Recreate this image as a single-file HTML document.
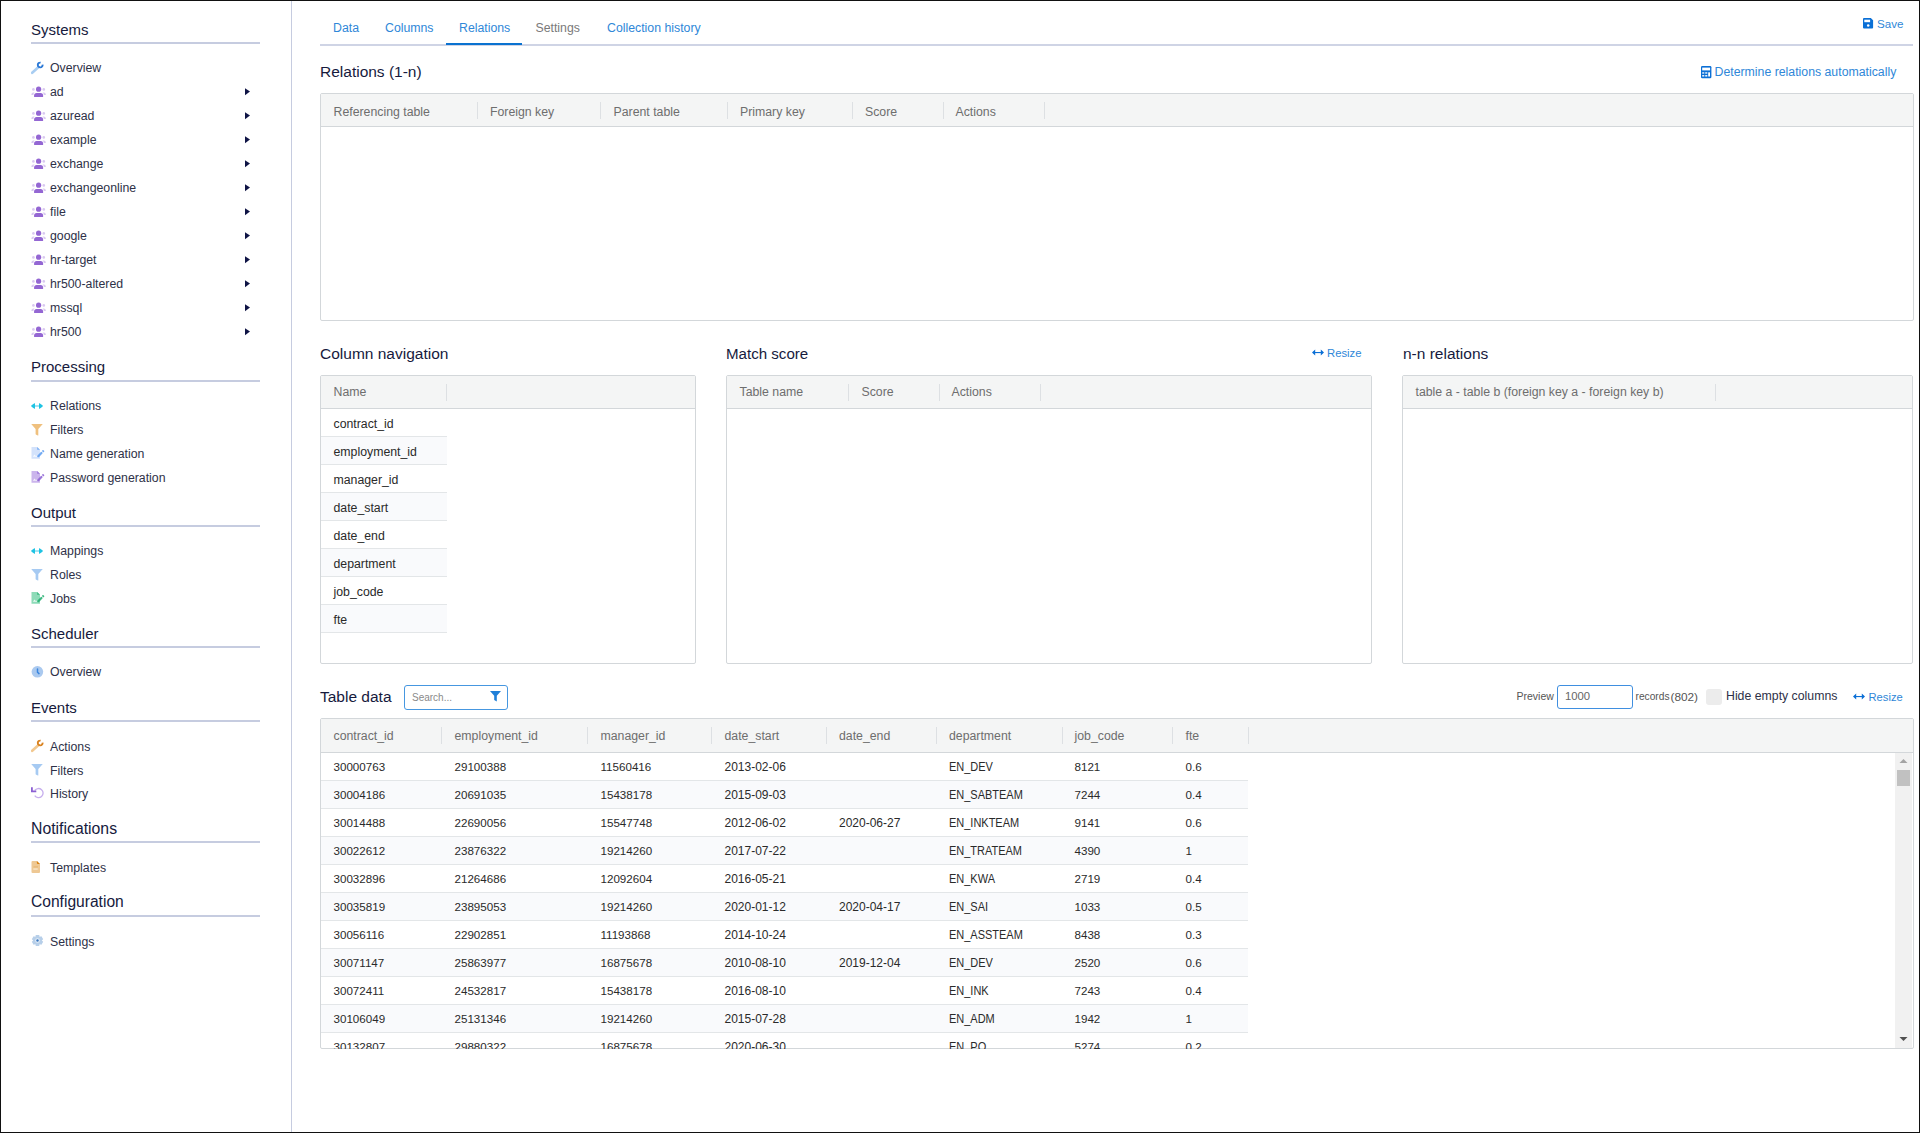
<!DOCTYPE html>
<html><head><meta charset="utf-8"><style>
html,body{margin:0;padding:0;background:#fff;width:1920px;height:1133px;overflow:hidden;font-family:"Liberation Sans", sans-serif;}
.t{position:absolute;white-space:nowrap;font-family:"Liberation Sans", sans-serif;}
.r{position:absolute;}
</style></head><body>
<div class="r" style="left:291px;top:0px;width:1px;height:1133px;background:#c6cce0"></div><div class="t" style="left:31px;top:22.30px;font-size:15px;line-height:15px;color:#161a3d;">Systems</div><div class="r" style="left:31px;top:42px;width:229px;height:2px;background:#c6cce0"></div><div class="t" style="left:50px;top:61.59px;font-size:12.3px;line-height:12.3px;color:#2e3148;">Overview</div><svg class="r" style="left:31px;top:61px" width="14" height="14" viewBox="0 0 14 14"><path d="M1.2 11.8 L7.3 6.2" stroke="#a8cdf2" stroke-width="2.6" stroke-linecap="round"/><path d="M11.56 3.58 A2.4 2.4 0 1 1 9.62 1.64" stroke="#2a78d6" stroke-width="1.9" fill="none"/></svg><div class="t" style="left:50px;top:85.59px;font-size:12.3px;line-height:12.3px;color:#2e3148;">ad</div><svg class="r" style="left:31px;top:86px" width="16" height="12" viewBox="0 0 16 12"><circle cx="7.6" cy="3.2" r="2.6" fill="#9467d3"/><path d="M3.1 11 V9.6 Q3.1 7.1 5.6 7.1 H9.6 Q12.1 7.1 12.1 9.6 V11Z" fill="#9467d3"/><circle cx="2.4" cy="3.4" r="1.3" fill="#d9c8f0"/><circle cx="12.8" cy="3.4" r="1.3" fill="#d9c8f0"/><path d="M0.3 9 Q0.3 6.6 2.6 6.6 H3.6 Q2.4 7.6 2.4 9Z" fill="#d9c8f0"/><path d="M14.9 9 Q14.9 6.6 12.6 6.6 H11.6 Q12.8 7.6 12.8 9Z" fill="#d9c8f0"/></svg><svg class="r" style="left:245px;top:88px" width="6" height="8" viewBox="0 0 6 8"><path d="M0 0.2 L5 3.6 L0 7.2Z" fill="#0f1445"/></svg><div class="t" style="left:50px;top:109.59px;font-size:12.3px;line-height:12.3px;color:#2e3148;">azuread</div><svg class="r" style="left:31px;top:110px" width="16" height="12" viewBox="0 0 16 12"><circle cx="7.6" cy="3.2" r="2.6" fill="#9467d3"/><path d="M3.1 11 V9.6 Q3.1 7.1 5.6 7.1 H9.6 Q12.1 7.1 12.1 9.6 V11Z" fill="#9467d3"/><circle cx="2.4" cy="3.4" r="1.3" fill="#d9c8f0"/><circle cx="12.8" cy="3.4" r="1.3" fill="#d9c8f0"/><path d="M0.3 9 Q0.3 6.6 2.6 6.6 H3.6 Q2.4 7.6 2.4 9Z" fill="#d9c8f0"/><path d="M14.9 9 Q14.9 6.6 12.6 6.6 H11.6 Q12.8 7.6 12.8 9Z" fill="#d9c8f0"/></svg><svg class="r" style="left:245px;top:112px" width="6" height="8" viewBox="0 0 6 8"><path d="M0 0.2 L5 3.6 L0 7.2Z" fill="#0f1445"/></svg><div class="t" style="left:50px;top:133.59px;font-size:12.3px;line-height:12.3px;color:#2e3148;">example</div><svg class="r" style="left:31px;top:134px" width="16" height="12" viewBox="0 0 16 12"><circle cx="7.6" cy="3.2" r="2.6" fill="#9467d3"/><path d="M3.1 11 V9.6 Q3.1 7.1 5.6 7.1 H9.6 Q12.1 7.1 12.1 9.6 V11Z" fill="#9467d3"/><circle cx="2.4" cy="3.4" r="1.3" fill="#d9c8f0"/><circle cx="12.8" cy="3.4" r="1.3" fill="#d9c8f0"/><path d="M0.3 9 Q0.3 6.6 2.6 6.6 H3.6 Q2.4 7.6 2.4 9Z" fill="#d9c8f0"/><path d="M14.9 9 Q14.9 6.6 12.6 6.6 H11.6 Q12.8 7.6 12.8 9Z" fill="#d9c8f0"/></svg><svg class="r" style="left:245px;top:136px" width="6" height="8" viewBox="0 0 6 8"><path d="M0 0.2 L5 3.6 L0 7.2Z" fill="#0f1445"/></svg><div class="t" style="left:50px;top:157.59px;font-size:12.3px;line-height:12.3px;color:#2e3148;">exchange</div><svg class="r" style="left:31px;top:158px" width="16" height="12" viewBox="0 0 16 12"><circle cx="7.6" cy="3.2" r="2.6" fill="#9467d3"/><path d="M3.1 11 V9.6 Q3.1 7.1 5.6 7.1 H9.6 Q12.1 7.1 12.1 9.6 V11Z" fill="#9467d3"/><circle cx="2.4" cy="3.4" r="1.3" fill="#d9c8f0"/><circle cx="12.8" cy="3.4" r="1.3" fill="#d9c8f0"/><path d="M0.3 9 Q0.3 6.6 2.6 6.6 H3.6 Q2.4 7.6 2.4 9Z" fill="#d9c8f0"/><path d="M14.9 9 Q14.9 6.6 12.6 6.6 H11.6 Q12.8 7.6 12.8 9Z" fill="#d9c8f0"/></svg><svg class="r" style="left:245px;top:160px" width="6" height="8" viewBox="0 0 6 8"><path d="M0 0.2 L5 3.6 L0 7.2Z" fill="#0f1445"/></svg><div class="t" style="left:50px;top:181.59px;font-size:12.3px;line-height:12.3px;color:#2e3148;">exchangeonline</div><svg class="r" style="left:31px;top:182px" width="16" height="12" viewBox="0 0 16 12"><circle cx="7.6" cy="3.2" r="2.6" fill="#9467d3"/><path d="M3.1 11 V9.6 Q3.1 7.1 5.6 7.1 H9.6 Q12.1 7.1 12.1 9.6 V11Z" fill="#9467d3"/><circle cx="2.4" cy="3.4" r="1.3" fill="#d9c8f0"/><circle cx="12.8" cy="3.4" r="1.3" fill="#d9c8f0"/><path d="M0.3 9 Q0.3 6.6 2.6 6.6 H3.6 Q2.4 7.6 2.4 9Z" fill="#d9c8f0"/><path d="M14.9 9 Q14.9 6.6 12.6 6.6 H11.6 Q12.8 7.6 12.8 9Z" fill="#d9c8f0"/></svg><svg class="r" style="left:245px;top:184px" width="6" height="8" viewBox="0 0 6 8"><path d="M0 0.2 L5 3.6 L0 7.2Z" fill="#0f1445"/></svg><div class="t" style="left:50px;top:205.59px;font-size:12.3px;line-height:12.3px;color:#2e3148;">file</div><svg class="r" style="left:31px;top:206px" width="16" height="12" viewBox="0 0 16 12"><circle cx="7.6" cy="3.2" r="2.6" fill="#9467d3"/><path d="M3.1 11 V9.6 Q3.1 7.1 5.6 7.1 H9.6 Q12.1 7.1 12.1 9.6 V11Z" fill="#9467d3"/><circle cx="2.4" cy="3.4" r="1.3" fill="#d9c8f0"/><circle cx="12.8" cy="3.4" r="1.3" fill="#d9c8f0"/><path d="M0.3 9 Q0.3 6.6 2.6 6.6 H3.6 Q2.4 7.6 2.4 9Z" fill="#d9c8f0"/><path d="M14.9 9 Q14.9 6.6 12.6 6.6 H11.6 Q12.8 7.6 12.8 9Z" fill="#d9c8f0"/></svg><svg class="r" style="left:245px;top:208px" width="6" height="8" viewBox="0 0 6 8"><path d="M0 0.2 L5 3.6 L0 7.2Z" fill="#0f1445"/></svg><div class="t" style="left:50px;top:229.59px;font-size:12.3px;line-height:12.3px;color:#2e3148;">google</div><svg class="r" style="left:31px;top:230px" width="16" height="12" viewBox="0 0 16 12"><circle cx="7.6" cy="3.2" r="2.6" fill="#9467d3"/><path d="M3.1 11 V9.6 Q3.1 7.1 5.6 7.1 H9.6 Q12.1 7.1 12.1 9.6 V11Z" fill="#9467d3"/><circle cx="2.4" cy="3.4" r="1.3" fill="#d9c8f0"/><circle cx="12.8" cy="3.4" r="1.3" fill="#d9c8f0"/><path d="M0.3 9 Q0.3 6.6 2.6 6.6 H3.6 Q2.4 7.6 2.4 9Z" fill="#d9c8f0"/><path d="M14.9 9 Q14.9 6.6 12.6 6.6 H11.6 Q12.8 7.6 12.8 9Z" fill="#d9c8f0"/></svg><svg class="r" style="left:245px;top:232px" width="6" height="8" viewBox="0 0 6 8"><path d="M0 0.2 L5 3.6 L0 7.2Z" fill="#0f1445"/></svg><div class="t" style="left:50px;top:253.59px;font-size:12.3px;line-height:12.3px;color:#2e3148;">hr-target</div><svg class="r" style="left:31px;top:254px" width="16" height="12" viewBox="0 0 16 12"><circle cx="7.6" cy="3.2" r="2.6" fill="#9467d3"/><path d="M3.1 11 V9.6 Q3.1 7.1 5.6 7.1 H9.6 Q12.1 7.1 12.1 9.6 V11Z" fill="#9467d3"/><circle cx="2.4" cy="3.4" r="1.3" fill="#d9c8f0"/><circle cx="12.8" cy="3.4" r="1.3" fill="#d9c8f0"/><path d="M0.3 9 Q0.3 6.6 2.6 6.6 H3.6 Q2.4 7.6 2.4 9Z" fill="#d9c8f0"/><path d="M14.9 9 Q14.9 6.6 12.6 6.6 H11.6 Q12.8 7.6 12.8 9Z" fill="#d9c8f0"/></svg><svg class="r" style="left:245px;top:256px" width="6" height="8" viewBox="0 0 6 8"><path d="M0 0.2 L5 3.6 L0 7.2Z" fill="#0f1445"/></svg><div class="t" style="left:50px;top:277.59px;font-size:12.3px;line-height:12.3px;color:#2e3148;">hr500-altered</div><svg class="r" style="left:31px;top:278px" width="16" height="12" viewBox="0 0 16 12"><circle cx="7.6" cy="3.2" r="2.6" fill="#9467d3"/><path d="M3.1 11 V9.6 Q3.1 7.1 5.6 7.1 H9.6 Q12.1 7.1 12.1 9.6 V11Z" fill="#9467d3"/><circle cx="2.4" cy="3.4" r="1.3" fill="#d9c8f0"/><circle cx="12.8" cy="3.4" r="1.3" fill="#d9c8f0"/><path d="M0.3 9 Q0.3 6.6 2.6 6.6 H3.6 Q2.4 7.6 2.4 9Z" fill="#d9c8f0"/><path d="M14.9 9 Q14.9 6.6 12.6 6.6 H11.6 Q12.8 7.6 12.8 9Z" fill="#d9c8f0"/></svg><svg class="r" style="left:245px;top:280px" width="6" height="8" viewBox="0 0 6 8"><path d="M0 0.2 L5 3.6 L0 7.2Z" fill="#0f1445"/></svg><div class="t" style="left:50px;top:301.59px;font-size:12.3px;line-height:12.3px;color:#2e3148;">mssql</div><svg class="r" style="left:31px;top:302px" width="16" height="12" viewBox="0 0 16 12"><circle cx="7.6" cy="3.2" r="2.6" fill="#9467d3"/><path d="M3.1 11 V9.6 Q3.1 7.1 5.6 7.1 H9.6 Q12.1 7.1 12.1 9.6 V11Z" fill="#9467d3"/><circle cx="2.4" cy="3.4" r="1.3" fill="#d9c8f0"/><circle cx="12.8" cy="3.4" r="1.3" fill="#d9c8f0"/><path d="M0.3 9 Q0.3 6.6 2.6 6.6 H3.6 Q2.4 7.6 2.4 9Z" fill="#d9c8f0"/><path d="M14.9 9 Q14.9 6.6 12.6 6.6 H11.6 Q12.8 7.6 12.8 9Z" fill="#d9c8f0"/></svg><svg class="r" style="left:245px;top:304px" width="6" height="8" viewBox="0 0 6 8"><path d="M0 0.2 L5 3.6 L0 7.2Z" fill="#0f1445"/></svg><div class="t" style="left:50px;top:325.59px;font-size:12.3px;line-height:12.3px;color:#2e3148;">hr500</div><svg class="r" style="left:31px;top:326px" width="16" height="12" viewBox="0 0 16 12"><circle cx="7.6" cy="3.2" r="2.6" fill="#9467d3"/><path d="M3.1 11 V9.6 Q3.1 7.1 5.6 7.1 H9.6 Q12.1 7.1 12.1 9.6 V11Z" fill="#9467d3"/><circle cx="2.4" cy="3.4" r="1.3" fill="#d9c8f0"/><circle cx="12.8" cy="3.4" r="1.3" fill="#d9c8f0"/><path d="M0.3 9 Q0.3 6.6 2.6 6.6 H3.6 Q2.4 7.6 2.4 9Z" fill="#d9c8f0"/><path d="M14.9 9 Q14.9 6.6 12.6 6.6 H11.6 Q12.8 7.6 12.8 9Z" fill="#d9c8f0"/></svg><svg class="r" style="left:245px;top:328px" width="6" height="8" viewBox="0 0 6 8"><path d="M0 0.2 L5 3.6 L0 7.2Z" fill="#0f1445"/></svg><div class="t" style="left:31px;top:359.30px;font-size:15px;line-height:15px;color:#161a3d;">Processing</div><div class="r" style="left:31px;top:380px;width:229px;height:2px;background:#c6cce0"></div><div class="t" style="left:50px;top:399.59px;font-size:12.3px;line-height:12.3px;color:#2e3148;">Relations</div><div class="t" style="left:50px;top:423.59px;font-size:12.3px;line-height:12.3px;color:#2e3148;">Filters</div><div class="t" style="left:50px;top:447.59px;font-size:12.3px;line-height:12.3px;color:#2e3148;">Name generation</div><div class="t" style="left:50px;top:471.59px;font-size:12.3px;line-height:12.3px;color:#2e3148;">Password generation</div><svg class="r" style="left:31px;top:403px" width="12" height="6" viewBox="0 0 12 6"><rect x="3" y="2.1" width="6" height="1.8" fill="#9be3f2"/><path d="M0.2 3 Q0.2 2.6 0.6 2.3 L3.4 0.2 Q4 0 4 0.6 V5.4 Q4 6 3.4 5.8 L0.6 3.7 Q0.2 3.4 0.2 3Z" fill="#1fc3e3"/><path d="M11.8 3 Q11.8 2.6 11.4 2.3 L8.6 0.2 Q8 0 8 0.6 V5.4 Q8 6 8.6 5.8 L11.4 3.7 Q11.8 3.4 11.8 3Z" fill="#1fc3e3"/></svg><svg class="r" style="left:31px;top:424px" width="12" height="12" viewBox="0 0 12 12"><path d="M0.2 0 H11.8 L7.3 5 V11.4 Q6.6 11.6 4.6 10.2 V5Z" fill="#efc07e"/></svg><svg class="r" style="left:31px;top:447px" width="14" height="12" viewBox="0 0 14 12"><path d="M0.5 0 H6.2 L9 2.7 V11.7 H0.5Z" fill="#d3e2fb"/><path d="M6.2 0 L9 2.7 H6.2Z" fill="#5c9df1" opacity="0.75"/><path d="M7.3 9.2 L10.4 6" stroke="#5c9df1" stroke-width="2.2" stroke-linecap="round" opacity="0.85"/><path d="M12 3.9 L12.4 4.3" stroke="#5c9df1" stroke-width="1.7" stroke-linecap="round" opacity="0.85"/><path d="M1.8 9.8 L3.5 7.4 L4.8 8.9 L5.4 8.4 L6.4 9.8Z" fill="#fff" opacity="0.8"/></svg><svg class="r" style="left:31px;top:471px" width="14" height="12" viewBox="0 0 14 12"><path d="M0.5 0 H6.2 L9 2.7 V11.7 H0.5Z" fill="#cbb5ec"/><path d="M6.2 0 L9 2.7 H6.2Z" fill="#8b60d4" opacity="0.75"/><path d="M7.3 9.2 L10.4 6" stroke="#8b60d4" stroke-width="2.2" stroke-linecap="round" opacity="0.85"/><path d="M12 3.9 L12.4 4.3" stroke="#8b60d4" stroke-width="1.7" stroke-linecap="round" opacity="0.85"/><path d="M1.8 9.8 L3.5 7.4 L4.8 8.9 L5.4 8.4 L6.4 9.8Z" fill="#fff" opacity="0.8"/></svg><div class="t" style="left:31px;top:505.30px;font-size:15px;line-height:15px;color:#161a3d;">Output</div><div class="r" style="left:31px;top:525px;width:229px;height:2px;background:#c6cce0"></div><div class="t" style="left:50px;top:544.59px;font-size:12.3px;line-height:12.3px;color:#2e3148;">Mappings</div><div class="t" style="left:50px;top:568.59px;font-size:12.3px;line-height:12.3px;color:#2e3148;">Roles</div><div class="t" style="left:50px;top:592.59px;font-size:12.3px;line-height:12.3px;color:#2e3148;">Jobs</div><svg class="r" style="left:31px;top:548px" width="12" height="6" viewBox="0 0 12 6"><rect x="3" y="2.1" width="6" height="1.8" fill="#9be3f2"/><path d="M0.2 3 Q0.2 2.6 0.6 2.3 L3.4 0.2 Q4 0 4 0.6 V5.4 Q4 6 3.4 5.8 L0.6 3.7 Q0.2 3.4 0.2 3Z" fill="#1fc3e3"/><path d="M11.8 3 Q11.8 2.6 11.4 2.3 L8.6 0.2 Q8 0 8 0.6 V5.4 Q8 6 8.6 5.8 L11.4 3.7 Q11.8 3.4 11.8 3Z" fill="#1fc3e3"/></svg><svg class="r" style="left:31px;top:569px" width="12" height="12" viewBox="0 0 12 12"><path d="M0.2 0 H11.8 L7.3 5 V11.4 Q6.6 11.6 4.6 10.2 V5Z" fill="#a6caf2"/></svg><svg class="r" style="left:31px;top:592px" width="14" height="12" viewBox="0 0 14 12"><path d="M0.5 0 H6.2 L9 2.7 V11.7 H0.5Z" fill="#8edbb8"/><path d="M6.2 0 L9 2.7 H6.2Z" fill="#1fae6e" opacity="0.75"/><path d="M7.3 9.2 L10.4 6" stroke="#1fae6e" stroke-width="2.2" stroke-linecap="round" opacity="0.85"/><path d="M12 3.9 L12.4 4.3" stroke="#1fae6e" stroke-width="1.7" stroke-linecap="round" opacity="0.85"/><path d="M1.8 9.8 L3.5 7.4 L4.8 8.9 L5.4 8.4 L6.4 9.8Z" fill="#fff" opacity="0.8"/></svg><div class="t" style="left:31px;top:626.30px;font-size:15px;line-height:15px;color:#161a3d;">Scheduler</div><div class="r" style="left:31px;top:646px;width:229px;height:2px;background:#c6cce0"></div><div class="t" style="left:50px;top:665.59px;font-size:12.3px;line-height:12.3px;color:#2e3148;">Overview</div><svg class="r" style="left:31px;top:665px" width="13" height="13" viewBox="0 0 13 13"><circle cx="6.4" cy="6.8" r="5.8" fill="#aac9ef"/><path d="M6.5 4 V7.2 L8 8.6" stroke="#3a86e0" stroke-width="1.5" fill="none" stroke-linecap="round"/></svg><div class="t" style="left:31px;top:700.30px;font-size:15px;line-height:15px;color:#161a3d;">Events</div><div class="r" style="left:31px;top:720px;width:229px;height:2px;background:#c6cce0"></div><div class="t" style="left:50px;top:740.59px;font-size:12.3px;line-height:12.3px;color:#2e3148;">Actions</div><div class="t" style="left:50px;top:764.59px;font-size:12.3px;line-height:12.3px;color:#2e3148;">Filters</div><div class="t" style="left:50px;top:787.59px;font-size:12.3px;line-height:12.3px;color:#2e3148;">History</div><svg class="r" style="left:31px;top:739px" width="14" height="14" viewBox="0 0 14 14"><path d="M1.2 11.8 L7.3 6.2" stroke="#f2c88f" stroke-width="2.6" stroke-linecap="round"/><path d="M11.56 3.58 A2.4 2.4 0 1 1 9.62 1.64" stroke="#d9821f" stroke-width="1.9" fill="none"/></svg><svg class="r" style="left:31px;top:764px" width="12" height="12" viewBox="0 0 12 12"><path d="M0.2 0 H11.8 L7.3 5 V11.4 Q6.6 11.6 4.6 10.2 V5Z" fill="#a6caf2"/></svg><svg class="r" style="left:31px;top:787px" width="14" height="13" viewBox="0 0 14 13"><path d="M3.73 3.46 A4.6 4.6 0 1 1 3.73 8.74" stroke="#c6aeed" stroke-width="1.3" fill="none"/><path d="M0.9 0.2 V4.3 H5.3" stroke="#8b5fd2" stroke-width="1.8" fill="none"/></svg><div class="t" style="left:31px;top:820.63px;font-size:15.8px;line-height:15.8px;color:#161a3d;">Notifications</div><div class="r" style="left:31px;top:841px;width:229px;height:2px;background:#c6cce0"></div><div class="t" style="left:50px;top:861.59px;font-size:12.3px;line-height:12.3px;color:#2e3148;">Templates</div><svg class="r" style="left:31px;top:861px" width="10" height="13" viewBox="0 0 10 13"><path d="M0.5 1 Q0.5 0 1.5 0 H5.9 L9 3.1 V11 Q9 12 8 12 H1.5 Q0.5 12 0.5 11Z" fill="#eec894"/><path d="M5.9 0 L9 3.1 H6.9 Q5.9 3.1 5.9 2.1Z" fill="#d9800f"/><rect x="2.5" y="5.4" width="4.5" height="1" fill="#e6b56f"/><rect x="2.3" y="7.4" width="4.4" height="1.3" fill="#f8e6cc"/></svg><div class="t" style="left:31px;top:893.79px;font-size:15.6px;line-height:15.6px;color:#161a3d;">Configuration</div><div class="r" style="left:31px;top:915px;width:229px;height:2px;background:#c6cce0"></div><div class="t" style="left:50px;top:935.59px;font-size:12.3px;line-height:12.3px;color:#2e3148;">Settings</div><svg class="r" style="left:31px;top:934px" width="13" height="13" viewBox="0 0 13 13"><polygon points="4.79,0.96 8.21,0.96 8.56,2.73 8.74,2.83 10.44,2.25 12.16,5.21 10.80,6.40 10.80,6.60 12.16,7.79 10.44,10.75 8.74,10.17 8.56,10.27 8.21,12.04 4.79,12.04 4.44,10.27 4.26,10.17 2.56,10.75 0.84,7.79 2.20,6.60 2.20,6.40 0.84,5.21 2.56,2.25 4.26,2.83 4.44,2.73" fill="#b7cfe9"/><circle cx="6.5" cy="6.5" r="2.3" fill="#e4edf7"/><circle cx="6.5" cy="6.5" r="1.2" fill="#3a78c0"/></svg><div class="t" style="left:333px;top:21.59px;font-size:12.3px;line-height:12.3px;color:#2f87d8;">Data</div><div class="t" style="left:385px;top:21.59px;font-size:12.3px;line-height:12.3px;color:#2f87d8;">Columns</div><div class="t" style="left:459px;top:21.59px;font-size:12.3px;line-height:12.3px;color:#2f87d8;">Relations</div><div class="t" style="left:535.5px;top:21.59px;font-size:12.3px;line-height:12.3px;color:#7a7a7a;">Settings</div><div class="t" style="left:607px;top:21.59px;font-size:12.3px;line-height:12.3px;color:#2f87d8;">Collection history</div><div class="r" style="left:320px;top:44px;width:1593px;height:2px;background:#cfd4e5"></div><div class="r" style="left:446px;top:43px;width:76px;height:2px;background:#0a72d0"></div><svg class="r" style="left:1863px;top:17.5px" width="11" height="11" viewBox="0 0 11 11"><path d="M0 1 Q0 0 1 0 H7.8 L10.1 2.3 V9.4 Q10.1 10.4 9.1 10.4 H1 Q0 10.4 0 9.4Z" fill="#0a6fd6"/><rect x="1.3" y="1.7" width="5.8" height="2.5" fill="#fff"/><circle cx="5.2" cy="7.5" r="1.25" fill="#fff"/></svg><div class="t" style="left:1877px;top:17.68px;font-size:11.6px;line-height:11.6px;color:#2f87d8;">Save</div><div class="t" style="left:320px;top:64.38px;font-size:15.5px;line-height:15.5px;color:#161a3d;">Relations (1-n)</div><svg class="r" style="left:1701px;top:66px" width="11" height="13" viewBox="0 0 11 13"><rect x="0" y="0" width="10.4" height="12.2" rx="1.3" fill="#0b6fd6"/><rect x="1.2" y="1.6" width="7.9" height="2.8" fill="#fff"/><rect x="1.2" y="6.3" width="2.1" height="1.3" fill="#fff"/><rect x="4.2" y="6.3" width="2.1" height="1.3" fill="#fff"/><rect x="1.2" y="9.1" width="2.1" height="1.4" fill="#fff"/><rect x="4.2" y="9.1" width="2.1" height="1.4" fill="#fff"/><rect x="7.2" y="6.3" width="1.8" height="4.2" fill="#fff"/></svg><div class="t" style="left:1714.5px;top:65.59px;font-size:12.3px;line-height:12.3px;color:#2f87d8;">Determine relations automatically</div><div class="r" style="left:320px;top:93px;width:1594px;height:228px;border:1px solid #d3d7da;box-sizing:border-box;background:#fff;border-radius:2px"></div><div class="r" style="left:321px;top:94px;width:1592px;height:33px;background:#f4f5f5;border-bottom:1px solid #d3d7da;box-sizing:border-box"></div><div class="t" style="left:333.5px;top:105.59px;font-size:12.3px;line-height:12.3px;color:#6e6e6e;">Referencing table</div><div class="t" style="left:490px;top:105.59px;font-size:12.3px;line-height:12.3px;color:#6e6e6e;">Foreign key</div><div class="t" style="left:613.5px;top:105.59px;font-size:12.3px;line-height:12.3px;color:#6e6e6e;">Parent table</div><div class="t" style="left:740px;top:105.59px;font-size:12.3px;line-height:12.3px;color:#6e6e6e;">Primary key</div><div class="t" style="left:865px;top:105.59px;font-size:12.3px;line-height:12.3px;color:#6e6e6e;">Score</div><div class="t" style="left:955.5px;top:105.59px;font-size:12.3px;line-height:12.3px;color:#6e6e6e;">Actions</div><div class="r" style="left:477px;top:102px;width:1px;height:17px;background:#dde0e3"></div><div class="r" style="left:600px;top:102px;width:1px;height:17px;background:#dde0e3"></div><div class="r" style="left:727px;top:102px;width:1px;height:17px;background:#dde0e3"></div><div class="r" style="left:852px;top:102px;width:1px;height:17px;background:#dde0e3"></div><div class="r" style="left:943px;top:102px;width:1px;height:17px;background:#dde0e3"></div><div class="r" style="left:1044px;top:102px;width:1px;height:17px;background:#dde0e3"></div><div class="t" style="left:320px;top:345.88px;font-size:15.5px;line-height:15.5px;color:#161a3d;">Column navigation</div><div class="r" style="left:320px;top:375px;width:376px;height:289px;border:1px solid #d3d7da;box-sizing:border-box;background:#fff;border-radius:2px"></div><div class="r" style="left:321px;top:376px;width:374px;height:33px;background:#f4f5f5;border-bottom:1px solid #d3d7da;box-sizing:border-box"></div><div class="t" style="left:333.5px;top:386.09px;font-size:12.3px;line-height:12.3px;color:#6e6e6e;">Name</div><div class="r" style="left:446px;top:384px;width:1px;height:17px;background:#dde0e3"></div><div class="r" style="left:321px;top:436px;width:126px;height:1px;background:#e3e6e8"></div><div class="t" style="left:333.5px;top:417.59px;font-size:12.3px;line-height:12.3px;color:#2a2a2a;">contract_id</div><div class="r" style="left:321px;top:437px;width:126px;height:27px;background:#f9fafc"></div><div class="r" style="left:321px;top:464px;width:126px;height:1px;background:#e3e6e8"></div><div class="t" style="left:333.5px;top:445.59px;font-size:12.3px;line-height:12.3px;color:#2a2a2a;">employment_id</div><div class="r" style="left:321px;top:492px;width:126px;height:1px;background:#e3e6e8"></div><div class="t" style="left:333.5px;top:473.59px;font-size:12.3px;line-height:12.3px;color:#2a2a2a;">manager_id</div><div class="r" style="left:321px;top:493px;width:126px;height:27px;background:#f9fafc"></div><div class="r" style="left:321px;top:520px;width:126px;height:1px;background:#e3e6e8"></div><div class="t" style="left:333.5px;top:501.59px;font-size:12.3px;line-height:12.3px;color:#2a2a2a;">date_start</div><div class="r" style="left:321px;top:548px;width:126px;height:1px;background:#e3e6e8"></div><div class="t" style="left:333.5px;top:529.59px;font-size:12.3px;line-height:12.3px;color:#2a2a2a;">date_end</div><div class="r" style="left:321px;top:549px;width:126px;height:27px;background:#f9fafc"></div><div class="r" style="left:321px;top:576px;width:126px;height:1px;background:#e3e6e8"></div><div class="t" style="left:333.5px;top:557.59px;font-size:12.3px;line-height:12.3px;color:#2a2a2a;">department</div><div class="r" style="left:321px;top:604px;width:126px;height:1px;background:#e3e6e8"></div><div class="t" style="left:333.5px;top:585.59px;font-size:12.3px;line-height:12.3px;color:#2a2a2a;">job_code</div><div class="r" style="left:321px;top:605px;width:126px;height:27px;background:#f9fafc"></div><div class="r" style="left:321px;top:632px;width:126px;height:1px;background:#e3e6e8"></div><div class="t" style="left:333.5px;top:613.59px;font-size:12.3px;line-height:12.3px;color:#2a2a2a;">fte</div><div class="t" style="left:726px;top:346.22px;font-size:15.1px;line-height:15.1px;color:#161a3d;">Match score</div><svg class="r" style="left:1312px;top:349px" width="12" height="7" viewBox="0 0 12 7"><path d="M0 3.5 L3.2 0.6 V6.4Z M12 3.5 L8.8 0.6 V6.4Z" fill="#0a6fd6"/><rect x="3" y="3" width="6" height="1.1" fill="#0a6fd6"/></svg><div class="t" style="left:1327px;top:348.43px;font-size:11.3px;line-height:11.3px;color:#2f87d8;">Resize</div><div class="r" style="left:726px;top:375px;width:646px;height:289px;border:1px solid #d3d7da;box-sizing:border-box;background:#fff;border-radius:2px"></div><div class="r" style="left:727px;top:376px;width:644px;height:33px;background:#f4f5f5;border-bottom:1px solid #d3d7da;box-sizing:border-box"></div><div class="t" style="left:739.5px;top:386.09px;font-size:12.3px;line-height:12.3px;color:#6e6e6e;">Table name</div><div class="t" style="left:861.5px;top:386.09px;font-size:12.3px;line-height:12.3px;color:#6e6e6e;">Score</div><div class="t" style="left:951.5px;top:386.09px;font-size:12.3px;line-height:12.3px;color:#6e6e6e;">Actions</div><div class="r" style="left:848px;top:384px;width:1px;height:17px;background:#dde0e3"></div><div class="r" style="left:939px;top:384px;width:1px;height:17px;background:#dde0e3"></div><div class="r" style="left:1040px;top:384px;width:1px;height:17px;background:#dde0e3"></div><div class="t" style="left:1403px;top:345.88px;font-size:15.5px;line-height:15.5px;color:#161a3d;">n-n relations</div><div class="r" style="left:1402px;top:375px;width:511px;height:289px;border:1px solid #d3d7da;box-sizing:border-box;background:#fff;border-radius:2px"></div><div class="r" style="left:1403px;top:376px;width:509px;height:33px;background:#f4f5f5;border-bottom:1px solid #d3d7da;box-sizing:border-box"></div><div class="t" style="left:1415.5px;top:386.09px;font-size:12.3px;line-height:12.3px;color:#6e6e6e;">table a - table b (foreign key a - foreign key b)</div><div class="r" style="left:1715px;top:384px;width:1px;height:17px;background:#dde0e3"></div><div class="t" style="left:320px;top:689.38px;font-size:15.5px;line-height:15.5px;color:#161a3d;">Table data</div><div class="r" style="left:404px;top:685px;width:104px;height:25px;border:1px solid #4697e0;border-radius:3px;box-sizing:border-box;background:#fff"></div><div class="t" style="left:412px;top:692.54px;font-size:10px;line-height:10px;color:#8a8a8a;">Search...</div><svg class="r" style="left:490px;top:691px" width="11" height="11" viewBox="0 0 11 11"><path d="M0 0 H11 L6.8 4.8 V10.5 L4.2 9 V4.8Z" fill="#1f7fd8"/></svg><div class="t" style="left:1516.5px;top:691.11px;font-size:10.5px;line-height:10.5px;color:#555;">Preview</div><div class="r" style="left:1557px;top:685px;width:76px;height:24px;border:1px solid #3f8fe0;border-radius:3px;box-sizing:border-box;background:#fff"></div><div class="t" style="left:1565px;top:691.43px;font-size:11.3px;line-height:11.3px;color:#666;">1000</div><div class="t" style="left:1635.5px;top:691.87px;font-size:10.2px;line-height:10.2px;color:#555;">records</div><div class="t" style="left:1670.5px;top:691.51px;font-size:11.8px;line-height:11.8px;color:#555;">(802)</div><div class="r" style="left:1706px;top:689px;width:16px;height:16px;background:#ececec;border-radius:3px"></div><div class="t" style="left:1726px;top:689.59px;font-size:12.3px;line-height:12.3px;color:#2e3148;">Hide empty columns</div><svg class="r" style="left:1853px;top:693px" width="12" height="7" viewBox="0 0 12 7"><path d="M0 3.5 L3.2 0.6 V6.4Z M12 3.5 L8.8 0.6 V6.4Z" fill="#0a6fd6"/><rect x="3" y="3" width="6" height="1.1" fill="#0a6fd6"/></svg><div class="t" style="left:1868.5px;top:691.52px;font-size:11.2px;line-height:11.2px;color:#2f87d8;">Resize</div><div class="r" style="left:320px;top:718px;width:1594px;height:331px;border:1px solid #d3d7da;box-sizing:border-box;background:#fff;border-radius:2px"></div><div class="r" style="left:321px;top:719px;width:1592px;height:34px;background:#f4f5f5;border-bottom:1px solid #d3d7da;box-sizing:border-box"></div><div class="t" style="left:333.5px;top:729.59px;font-size:12.3px;line-height:12.3px;color:#6e6e6e;">contract_id</div><div class="t" style="left:454.5px;top:729.59px;font-size:12.3px;line-height:12.3px;color:#6e6e6e;">employment_id</div><div class="t" style="left:600.5px;top:729.59px;font-size:12.3px;line-height:12.3px;color:#6e6e6e;">manager_id</div><div class="t" style="left:724.5px;top:729.59px;font-size:12.3px;line-height:12.3px;color:#6e6e6e;">date_start</div><div class="t" style="left:839px;top:729.59px;font-size:12.3px;line-height:12.3px;color:#6e6e6e;">date_end</div><div class="t" style="left:949px;top:729.59px;font-size:12.3px;line-height:12.3px;color:#6e6e6e;">department</div><div class="t" style="left:1074.5px;top:729.59px;font-size:12.3px;line-height:12.3px;color:#6e6e6e;">job_code</div><div class="t" style="left:1185.5px;top:729.59px;font-size:12.3px;line-height:12.3px;color:#6e6e6e;">fte</div><div class="r" style="left:441px;top:727px;width:1px;height:17px;background:#dde0e3"></div><div class="r" style="left:587px;top:727px;width:1px;height:17px;background:#dde0e3"></div><div class="r" style="left:711px;top:727px;width:1px;height:17px;background:#dde0e3"></div><div class="r" style="left:826px;top:727px;width:1px;height:17px;background:#dde0e3"></div><div class="r" style="left:936px;top:727px;width:1px;height:17px;background:#dde0e3"></div><div class="r" style="left:1062px;top:727px;width:1px;height:17px;background:#dde0e3"></div><div class="r" style="left:1172px;top:727px;width:1px;height:17px;background:#dde0e3"></div><div class="r" style="left:1248px;top:727px;width:1px;height:17px;background:#dde0e3"></div><div class="r" style="left:321px;top:752px;width:1574px;height:297px;overflow:hidden"><div class="r" style="left:0;top:28px;width:927px;height:1px;background:#e3e6e8"></div><div class="t" style="left:12.5px;top:9.18px;font-size:11.6px;line-height:11.6px;color:#2a2a2a;">30000763</div><div class="t" style="left:133.5px;top:9.18px;font-size:11.6px;line-height:11.6px;color:#2a2a2a;">29100388</div><div class="t" style="left:279.5px;top:9.18px;font-size:11.6px;line-height:11.6px;color:#2a2a2a;">11560416</div><div class="t" style="left:403.5px;top:8.84px;font-size:12px;line-height:12px;color:#2a2a2a;">2013-02-06</div><div class="t" style="left:518px;top:8.59px;font-size:12.3px;line-height:12.3px;color:#2a2a2a;"></div><div class="t" style="left:628px;top:8.84px;font-size:12px;line-height:12px;color:#2a2a2a;transform:scaleX(0.915);transform-origin:0 0;">EN_DEV</div><div class="t" style="left:753.5px;top:9.18px;font-size:11.6px;line-height:11.6px;color:#2a2a2a;">8121</div><div class="t" style="left:864.5px;top:9.18px;font-size:11.6px;line-height:11.6px;color:#2a2a2a;">0.6</div><div class="r" style="left:0;top:29px;width:927px;height:27px;background:#f9fafc"></div><div class="r" style="left:0;top:56px;width:927px;height:1px;background:#e3e6e8"></div><div class="t" style="left:12.5px;top:37.18px;font-size:11.6px;line-height:11.6px;color:#2a2a2a;">30004186</div><div class="t" style="left:133.5px;top:37.18px;font-size:11.6px;line-height:11.6px;color:#2a2a2a;">20691035</div><div class="t" style="left:279.5px;top:37.18px;font-size:11.6px;line-height:11.6px;color:#2a2a2a;">15438178</div><div class="t" style="left:403.5px;top:36.84px;font-size:12px;line-height:12px;color:#2a2a2a;">2015-09-03</div><div class="t" style="left:518px;top:36.59px;font-size:12.3px;line-height:12.3px;color:#2a2a2a;"></div><div class="t" style="left:628px;top:36.84px;font-size:12px;line-height:12px;color:#2a2a2a;transform:scaleX(0.915);transform-origin:0 0;">EN_SABTEAM</div><div class="t" style="left:753.5px;top:37.18px;font-size:11.6px;line-height:11.6px;color:#2a2a2a;">7244</div><div class="t" style="left:864.5px;top:37.18px;font-size:11.6px;line-height:11.6px;color:#2a2a2a;">0.4</div><div class="r" style="left:0;top:84px;width:927px;height:1px;background:#e3e6e8"></div><div class="t" style="left:12.5px;top:65.18px;font-size:11.6px;line-height:11.6px;color:#2a2a2a;">30014488</div><div class="t" style="left:133.5px;top:65.18px;font-size:11.6px;line-height:11.6px;color:#2a2a2a;">22690056</div><div class="t" style="left:279.5px;top:65.18px;font-size:11.6px;line-height:11.6px;color:#2a2a2a;">15547748</div><div class="t" style="left:403.5px;top:64.84px;font-size:12px;line-height:12px;color:#2a2a2a;">2012-06-02</div><div class="t" style="left:518px;top:64.84px;font-size:12px;line-height:12px;color:#2a2a2a;">2020-06-27</div><div class="t" style="left:628px;top:64.84px;font-size:12px;line-height:12px;color:#2a2a2a;transform:scaleX(0.915);transform-origin:0 0;">EN_INKTEAM</div><div class="t" style="left:753.5px;top:65.18px;font-size:11.6px;line-height:11.6px;color:#2a2a2a;">9141</div><div class="t" style="left:864.5px;top:65.18px;font-size:11.6px;line-height:11.6px;color:#2a2a2a;">0.6</div><div class="r" style="left:0;top:85px;width:927px;height:27px;background:#f9fafc"></div><div class="r" style="left:0;top:112px;width:927px;height:1px;background:#e3e6e8"></div><div class="t" style="left:12.5px;top:93.18px;font-size:11.6px;line-height:11.6px;color:#2a2a2a;">30022612</div><div class="t" style="left:133.5px;top:93.18px;font-size:11.6px;line-height:11.6px;color:#2a2a2a;">23876322</div><div class="t" style="left:279.5px;top:93.18px;font-size:11.6px;line-height:11.6px;color:#2a2a2a;">19214260</div><div class="t" style="left:403.5px;top:92.84px;font-size:12px;line-height:12px;color:#2a2a2a;">2017-07-22</div><div class="t" style="left:518px;top:92.59px;font-size:12.3px;line-height:12.3px;color:#2a2a2a;"></div><div class="t" style="left:628px;top:92.84px;font-size:12px;line-height:12px;color:#2a2a2a;transform:scaleX(0.915);transform-origin:0 0;">EN_TRATEAM</div><div class="t" style="left:753.5px;top:93.18px;font-size:11.6px;line-height:11.6px;color:#2a2a2a;">4390</div><div class="t" style="left:864.5px;top:93.18px;font-size:11.6px;line-height:11.6px;color:#2a2a2a;">1</div><div class="r" style="left:0;top:140px;width:927px;height:1px;background:#e3e6e8"></div><div class="t" style="left:12.5px;top:121.18px;font-size:11.6px;line-height:11.6px;color:#2a2a2a;">30032896</div><div class="t" style="left:133.5px;top:121.18px;font-size:11.6px;line-height:11.6px;color:#2a2a2a;">21264686</div><div class="t" style="left:279.5px;top:121.18px;font-size:11.6px;line-height:11.6px;color:#2a2a2a;">12092604</div><div class="t" style="left:403.5px;top:120.84px;font-size:12px;line-height:12px;color:#2a2a2a;">2016-05-21</div><div class="t" style="left:518px;top:120.59px;font-size:12.3px;line-height:12.3px;color:#2a2a2a;"></div><div class="t" style="left:628px;top:120.84px;font-size:12px;line-height:12px;color:#2a2a2a;transform:scaleX(0.915);transform-origin:0 0;">EN_KWA</div><div class="t" style="left:753.5px;top:121.18px;font-size:11.6px;line-height:11.6px;color:#2a2a2a;">2719</div><div class="t" style="left:864.5px;top:121.18px;font-size:11.6px;line-height:11.6px;color:#2a2a2a;">0.4</div><div class="r" style="left:0;top:141px;width:927px;height:27px;background:#f9fafc"></div><div class="r" style="left:0;top:168px;width:927px;height:1px;background:#e3e6e8"></div><div class="t" style="left:12.5px;top:149.18px;font-size:11.6px;line-height:11.6px;color:#2a2a2a;">30035819</div><div class="t" style="left:133.5px;top:149.18px;font-size:11.6px;line-height:11.6px;color:#2a2a2a;">23895053</div><div class="t" style="left:279.5px;top:149.18px;font-size:11.6px;line-height:11.6px;color:#2a2a2a;">19214260</div><div class="t" style="left:403.5px;top:148.84px;font-size:12px;line-height:12px;color:#2a2a2a;">2020-01-12</div><div class="t" style="left:518px;top:148.84px;font-size:12px;line-height:12px;color:#2a2a2a;">2020-04-17</div><div class="t" style="left:628px;top:148.84px;font-size:12px;line-height:12px;color:#2a2a2a;transform:scaleX(0.915);transform-origin:0 0;">EN_SAI</div><div class="t" style="left:753.5px;top:149.18px;font-size:11.6px;line-height:11.6px;color:#2a2a2a;">1033</div><div class="t" style="left:864.5px;top:149.18px;font-size:11.6px;line-height:11.6px;color:#2a2a2a;">0.5</div><div class="r" style="left:0;top:196px;width:927px;height:1px;background:#e3e6e8"></div><div class="t" style="left:12.5px;top:177.18px;font-size:11.6px;line-height:11.6px;color:#2a2a2a;">30056116</div><div class="t" style="left:133.5px;top:177.18px;font-size:11.6px;line-height:11.6px;color:#2a2a2a;">22902851</div><div class="t" style="left:279.5px;top:177.18px;font-size:11.6px;line-height:11.6px;color:#2a2a2a;">11193868</div><div class="t" style="left:403.5px;top:176.84px;font-size:12px;line-height:12px;color:#2a2a2a;">2014-10-24</div><div class="t" style="left:518px;top:176.59px;font-size:12.3px;line-height:12.3px;color:#2a2a2a;"></div><div class="t" style="left:628px;top:176.84px;font-size:12px;line-height:12px;color:#2a2a2a;transform:scaleX(0.915);transform-origin:0 0;">EN_ASSTEAM</div><div class="t" style="left:753.5px;top:177.18px;font-size:11.6px;line-height:11.6px;color:#2a2a2a;">8438</div><div class="t" style="left:864.5px;top:177.18px;font-size:11.6px;line-height:11.6px;color:#2a2a2a;">0.3</div><div class="r" style="left:0;top:197px;width:927px;height:27px;background:#f9fafc"></div><div class="r" style="left:0;top:224px;width:927px;height:1px;background:#e3e6e8"></div><div class="t" style="left:12.5px;top:205.18px;font-size:11.6px;line-height:11.6px;color:#2a2a2a;">30071147</div><div class="t" style="left:133.5px;top:205.18px;font-size:11.6px;line-height:11.6px;color:#2a2a2a;">25863977</div><div class="t" style="left:279.5px;top:205.18px;font-size:11.6px;line-height:11.6px;color:#2a2a2a;">16875678</div><div class="t" style="left:403.5px;top:204.84px;font-size:12px;line-height:12px;color:#2a2a2a;">2010-08-10</div><div class="t" style="left:518px;top:204.84px;font-size:12px;line-height:12px;color:#2a2a2a;">2019-12-04</div><div class="t" style="left:628px;top:204.84px;font-size:12px;line-height:12px;color:#2a2a2a;transform:scaleX(0.915);transform-origin:0 0;">EN_DEV</div><div class="t" style="left:753.5px;top:205.18px;font-size:11.6px;line-height:11.6px;color:#2a2a2a;">2520</div><div class="t" style="left:864.5px;top:205.18px;font-size:11.6px;line-height:11.6px;color:#2a2a2a;">0.6</div><div class="r" style="left:0;top:252px;width:927px;height:1px;background:#e3e6e8"></div><div class="t" style="left:12.5px;top:233.18px;font-size:11.6px;line-height:11.6px;color:#2a2a2a;">30072411</div><div class="t" style="left:133.5px;top:233.18px;font-size:11.6px;line-height:11.6px;color:#2a2a2a;">24532817</div><div class="t" style="left:279.5px;top:233.18px;font-size:11.6px;line-height:11.6px;color:#2a2a2a;">15438178</div><div class="t" style="left:403.5px;top:232.84px;font-size:12px;line-height:12px;color:#2a2a2a;">2016-08-10</div><div class="t" style="left:518px;top:232.59px;font-size:12.3px;line-height:12.3px;color:#2a2a2a;"></div><div class="t" style="left:628px;top:232.84px;font-size:12px;line-height:12px;color:#2a2a2a;transform:scaleX(0.915);transform-origin:0 0;">EN_INK</div><div class="t" style="left:753.5px;top:233.18px;font-size:11.6px;line-height:11.6px;color:#2a2a2a;">7243</div><div class="t" style="left:864.5px;top:233.18px;font-size:11.6px;line-height:11.6px;color:#2a2a2a;">0.4</div><div class="r" style="left:0;top:253px;width:927px;height:27px;background:#f9fafc"></div><div class="r" style="left:0;top:280px;width:927px;height:1px;background:#e3e6e8"></div><div class="t" style="left:12.5px;top:261.18px;font-size:11.6px;line-height:11.6px;color:#2a2a2a;">30106049</div><div class="t" style="left:133.5px;top:261.18px;font-size:11.6px;line-height:11.6px;color:#2a2a2a;">25131346</div><div class="t" style="left:279.5px;top:261.18px;font-size:11.6px;line-height:11.6px;color:#2a2a2a;">19214260</div><div class="t" style="left:403.5px;top:260.84px;font-size:12px;line-height:12px;color:#2a2a2a;">2015-07-28</div><div class="t" style="left:518px;top:260.59px;font-size:12.3px;line-height:12.3px;color:#2a2a2a;"></div><div class="t" style="left:628px;top:260.84px;font-size:12px;line-height:12px;color:#2a2a2a;transform:scaleX(0.915);transform-origin:0 0;">EN_ADM</div><div class="t" style="left:753.5px;top:261.18px;font-size:11.6px;line-height:11.6px;color:#2a2a2a;">1942</div><div class="t" style="left:864.5px;top:261.18px;font-size:11.6px;line-height:11.6px;color:#2a2a2a;">1</div><div class="r" style="left:0;top:308px;width:927px;height:1px;background:#e3e6e8"></div><div class="t" style="left:12.5px;top:289.18px;font-size:11.6px;line-height:11.6px;color:#2a2a2a;">30132807</div><div class="t" style="left:133.5px;top:289.18px;font-size:11.6px;line-height:11.6px;color:#2a2a2a;">29880322</div><div class="t" style="left:279.5px;top:289.18px;font-size:11.6px;line-height:11.6px;color:#2a2a2a;">16875678</div><div class="t" style="left:403.5px;top:288.84px;font-size:12px;line-height:12px;color:#2a2a2a;">2020-06-30</div><div class="t" style="left:518px;top:288.59px;font-size:12.3px;line-height:12.3px;color:#2a2a2a;"></div><div class="t" style="left:628px;top:288.84px;font-size:12px;line-height:12px;color:#2a2a2a;transform:scaleX(0.915);transform-origin:0 0;">EN_PO</div><div class="t" style="left:753.5px;top:289.18px;font-size:11.6px;line-height:11.6px;color:#2a2a2a;">5274</div><div class="t" style="left:864.5px;top:289.18px;font-size:11.6px;line-height:11.6px;color:#2a2a2a;">0.2</div></div><div class="r" style="left:1895px;top:753px;width:17px;height:295px;background:#f1f1f1"></div><svg class="r" style="left:1899px;top:758px" width="9" height="6" viewBox="0 0 9 6"><path d="M0.5 5 L4.5 1 L8.5 5Z" fill="#a3a3a3"/></svg><div class="r" style="left:1897px;top:770px;width:13px;height:16px;background:#c1c1c1"></div><svg class="r" style="left:1899px;top:1036px" width="9" height="6" viewBox="0 0 9 6"><path d="M0.5 1 L4.5 5 L8.5 1Z" fill="#505050"/></svg><div class="r" style="left:0px;top:0px;width:1920px;height:1133px;border:1px solid #111;box-sizing:border-box;background:transparent"></div>
</body></html>
